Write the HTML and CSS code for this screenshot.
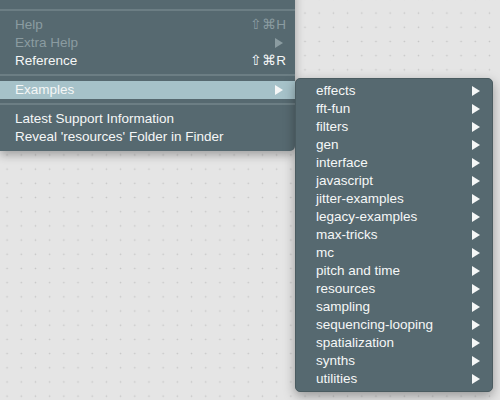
FILE: index.html
```html
<!DOCTYPE html>
<html lang="en">
<head>
  <meta charset="UTF-8" />
  <title>Help menu</title>
  <link rel="stylesheet" href="styles.css">
</head>
<body>
  <div class="desk">
    <div class="menu main">
      <div class="item cut"></div>
      <div class="sep"></div>
      <div class="item off">Help <span class="key">⇧⌘H</span></div>
      <div class="item off">Extra Help <svg class="arrow" viewBox="0 0 8 10"><path d="M0 0L8 5L0 10Z"/></svg></div>
      <div class="item">Reference <span class="key">⇧⌘R</span></div>
      <div class="sep"></div>
      <div class="item on">Examples <svg class="arrow" viewBox="0 0 8 10"><path d="M0 0L8 5L0 10Z"/></svg></div>
      <div class="sep"></div>
      <div class="item">Latest Support Information</div>
      <div class="item">Reveal 'resources' Folder in Finder</div>
    </div>

    <div class="menu sub">
      <div class="item">effects <svg class="arrow" viewBox="0 0 8 10"><path d="M0 0L8 5L0 10Z"/></svg></div>
      <div class="item">fft-fun <svg class="arrow" viewBox="0 0 8 10"><path d="M0 0L8 5L0 10Z"/></svg></div>
      <div class="item">filters <svg class="arrow" viewBox="0 0 8 10"><path d="M0 0L8 5L0 10Z"/></svg></div>
      <div class="item">gen <svg class="arrow" viewBox="0 0 8 10"><path d="M0 0L8 5L0 10Z"/></svg></div>
      <div class="item">interface <svg class="arrow" viewBox="0 0 8 10"><path d="M0 0L8 5L0 10Z"/></svg></div>
      <div class="item">javascript <svg class="arrow" viewBox="0 0 8 10"><path d="M0 0L8 5L0 10Z"/></svg></div>
      <div class="item">jitter-examples <svg class="arrow" viewBox="0 0 8 10"><path d="M0 0L8 5L0 10Z"/></svg></div>
      <div class="item">legacy-examples <svg class="arrow" viewBox="0 0 8 10"><path d="M0 0L8 5L0 10Z"/></svg></div>
      <div class="item">max-tricks <svg class="arrow" viewBox="0 0 8 10"><path d="M0 0L8 5L0 10Z"/></svg></div>
      <div class="item">mc <svg class="arrow" viewBox="0 0 8 10"><path d="M0 0L8 5L0 10Z"/></svg></div>
      <div class="item">pitch and time <svg class="arrow" viewBox="0 0 8 10"><path d="M0 0L8 5L0 10Z"/></svg></div>
      <div class="item">resources <svg class="arrow" viewBox="0 0 8 10"><path d="M0 0L8 5L0 10Z"/></svg></div>
      <div class="item">sampling <svg class="arrow" viewBox="0 0 8 10"><path d="M0 0L8 5L0 10Z"/></svg></div>
      <div class="item">sequencing-looping <svg class="arrow" viewBox="0 0 8 10"><path d="M0 0L8 5L0 10Z"/></svg></div>
      <div class="item">spatialization <svg class="arrow" viewBox="0 0 8 10"><path d="M0 0L8 5L0 10Z"/></svg></div>
      <div class="item">synths <svg class="arrow" viewBox="0 0 8 10"><path d="M0 0L8 5L0 10Z"/></svg></div>
      <div class="item">utilities <svg class="arrow" viewBox="0 0 8 10"><path d="M0 0L8 5L0 10Z"/></svg></div>
    </div>
  </div>
</body>
</html>
```

FILE: styles.css
```css
html, body {
  margin: 0;
  height: 100%;
}
body {
  font-family: "Liberation Sans", Arial, sans-serif;
  font-size: 13.5px;
  background-color: #e5e5e5;
  background-image: radial-gradient(circle, #c4c4c4 0.8px, transparent 1px);
  background-size: 14.2px 14.2px;
  background-position: 0 6px;
  overflow: hidden;
}
.desk {
  display: flex;
  align-items: flex-start;
}
.menu {
  background: #566970;
  color: #f5f7f7;
  box-sizing: border-box;
}
.main {
  width: 295px;
  margin-top: -13px;
  padding-bottom: 5px;
  border-radius: 0 0 5px 0;
  box-shadow: 0 4px 10px rgba(0, 0, 0, 0.3);
}
.sub {
  width: 198px;
  margin-top: 78px;
  padding: 3px 0;
  border-radius: 5px;
  box-shadow: 0 4px 12px rgba(0, 0, 0, 0.35);
  border: 1px solid #4a5b60;
}
.item {
  height: 18px;
  line-height: 18px;
  padding: 0 12px 0 15px;
  display: flex;
  align-items: center;
  justify-content: space-between;
  white-space: nowrap;
}
.sub .item {
  padding: 0 12px 0 20px;
}
.item.off {
  color: #8b9ca1;
}
.item.on {
  background: #a6c2c9;
}
.key {
  margin-right: -3px;
}
.arrow {
  width: 8px;
  height: 10px;
  fill: currentColor;
}
.sep {
  height: 11px;
  padding-top: 4px;
  box-sizing: border-box;
}
.sep::after {
  content: "";
  display: block;
  height: 2px;
  background: #6c7e84;
}
```
